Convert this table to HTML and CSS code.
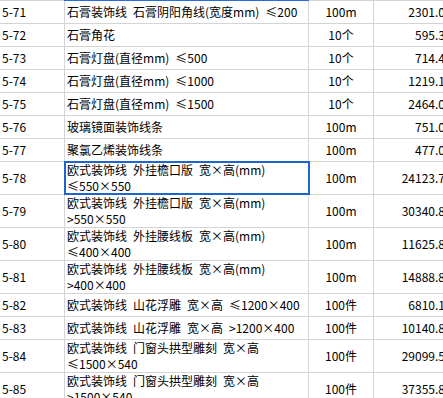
FILE: index.html
```html
<!DOCTYPE html>
<html lang="zh">
<head>
<meta charset="utf-8">
<link rel="stylesheet" href="styles.css">
</head>
<body>
<div class="sheet">
  <div class="row first">
    <div class="c a">5-71</div><div class="c b top-sel">石膏装饰线&ensp;石膏阴阳角线(宽度mm)&ensp;<span class="w">≤</span>200</div><div class="c u">100m</div><div class="c v">2301.0</div>
  </div>
  <div class="row">
    <div class="c a">5-72</div><div class="c b">石膏角花</div><div class="c u">10个</div><div class="c v">595.3</div>
  </div>
  <div class="row">
    <div class="c a">5-73</div><div class="c b">石膏灯盘(直径mm)&ensp;<span class="w">≤</span>500</div><div class="c u">10个</div><div class="c v">714.4</div>
  </div>
  <div class="row">
    <div class="c a">5-74</div><div class="c b">石膏灯盘(直径mm)&ensp;<span class="w">≤</span>1000</div><div class="c u">10个</div><div class="c v">1219.1</div>
  </div>
  <div class="row">
    <div class="c a">5-75</div><div class="c b">石膏灯盘(直径mm)&ensp;<span class="w">≤</span>1500</div><div class="c u">10个</div><div class="c v">2464.0</div>
  </div>
  <div class="row">
    <div class="c a">5-76</div><div class="c b">玻璃镜面装饰线条</div><div class="c u">100m</div><div class="c v">751.0</div>
  </div>
  <div class="row">
    <div class="c a">5-77</div><div class="c b">聚氯乙烯装饰线条</div><div class="c u">100m</div><div class="c v">477.0</div>
  </div>
  <div class="row tall">
    <div class="c a">5-78</div><div class="c b wrap selected">欧式装饰线&ensp;外挂檐口版&ensp;宽<span class="w">×</span>高(mm)<br><span class="w">≤</span>550<span class="w">×</span>550</div><div class="c u">100m</div><div class="c v">24123.7</div>
  </div>
  <div class="row tall">
    <div class="c a">5-79</div><div class="c b wrap">欧式装饰线&ensp;外挂檐口版&ensp;宽<span class="w">×</span>高(mm)<br>&gt;550<span class="w">×</span>550</div><div class="c u">100m</div><div class="c v">30340.8</div>
  </div>
  <div class="row tall">
    <div class="c a">5-80</div><div class="c b wrap">欧式装饰线&ensp;外挂腰线板&ensp;宽<span class="w">×</span>高(mm)<br><span class="w">≤</span>400<span class="w">×</span>400</div><div class="c u">100m</div><div class="c v">11625.8</div>
  </div>
  <div class="row tall">
    <div class="c a">5-81</div><div class="c b wrap">欧式装饰线&ensp;外挂腰线板&ensp;宽<span class="w">×</span>高(mm)<br>&gt;400<span class="w">×</span>400</div><div class="c u">100m</div><div class="c v">14888.8</div>
  </div>
  <div class="row">
    <div class="c a">5-82</div><div class="c b">欧式装饰线&ensp;山花浮雕&ensp;宽<span class="w">×</span>高&ensp;<span class="w">≤</span>1200<span class="w">×</span>400</div><div class="c u">100件</div><div class="c v">6810.1</div>
  </div>
  <div class="row">
    <div class="c a">5-83</div><div class="c b">欧式装饰线&ensp;山花浮雕&ensp;宽<span class="w">×</span>高&ensp;&gt;1200<span class="w">×</span>400</div><div class="c u">100件</div><div class="c v">10140.8</div>
  </div>
  <div class="row tall">
    <div class="c a">5-84</div><div class="c b wrap">欧式装饰线&ensp;门窗头拱型雕刻&ensp;宽<span class="w">×</span>高<br><span class="w">≤</span>1500<span class="w">×</span>540</div><div class="c u">100件</div><div class="c v">29099.5</div>
  </div>
  <div class="row tall">
    <div class="c a">5-85</div><div class="c b wrap">欧式装饰线&ensp;门窗头拱型雕刻&ensp;宽<span class="w">×</span>高<br>&gt;1500<span class="w">×</span>540</div><div class="c u">100件</div><div class="c v">37355.8</div>
  </div>
</div>
</body>
</html>
```
FILE: styles.css
```css
html, body {
  margin: 0;
  padding: 0;
  background: #ffffff;
  overflow: hidden;
}

.sheet {
  width: 460px;
  font-family: "Noto Sans CJK SC", "Noto Sans", sans-serif;
  font-size: 12px;
  color: #000000;
}

.row {
  display: grid;
  grid-template-columns: 65px 244px 65px 86px;
  height: 23px;
}

.row.first {
  height: 24px;
  border-top: 1px solid #d4d4d4;
  box-sizing: border-box;
}

.row.tall {
  height: 33px;
}

.c {
  box-sizing: border-box;
  border-right: 1px solid #d4d4d4;
  border-bottom: 1px solid #d4d4d4;
  display: flex;
  align-items: center;
  white-space: nowrap;
  overflow: hidden;
  line-height: 16px;
}

.a {
  padding-left: 2px;
}

.b {
  padding-left: 2px;
  position: relative;
  overflow: visible;
}

.b.wrap {
  display: block;
  padding-top: 0;
}

.w {
  display: inline-block;
  width: 12px;
  text-align: center;
}

.u {
  justify-content: center;
}

.v {
  justify-content: flex-end;
  padding-right: 15px;
  border-right: none;
}

.top-sel::before {
  content: "";
  position: absolute;
  left: -1px;
  right: -1px;
  top: -1px;
  height: 1px;
  background: #2a6fd0;
}

.selected::after {
  content: "";
  position: absolute;
  left: -1px;
  right: -2px;
  top: -1px;
  bottom: -1px;
  border: 2px solid #1f66cc;
  pointer-events: none;
}
```
